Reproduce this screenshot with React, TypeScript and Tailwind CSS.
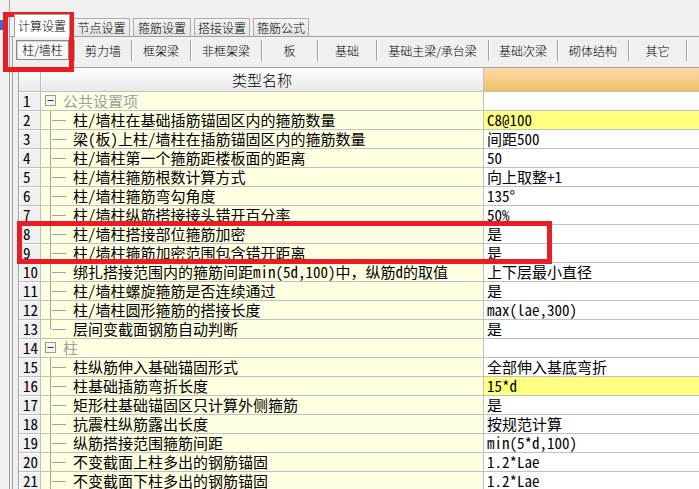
import React from "react"

type Row = {
  n: number
  text: string
  value?: string
  kind: "group" | "child" | "last"
  hl?: boolean
  clip?: boolean
}

const rows: Row[] = [
  { n: 1, text: "公共设置项", kind: "group" },
  { n: 2, text: "柱/墙柱在基础插筋锚固区内的箍筋数量", value: "C8@100", kind: "child", hl: true },
  { n: 3, text: "梁(板)上柱/墙柱在插筋锚固区内的箍筋数量", value: "间距500", kind: "child", clip: true },
  { n: 4, text: "柱/墙柱第一个箍筋距楼板面的距离", value: "50", kind: "child" },
  { n: 5, text: "柱/墙柱箍筋根数计算方式", value: "向上取整+1", kind: "child" },
  { n: 6, text: "柱/墙柱箍筋弯勾角度", value: "135°", kind: "child" },
  { n: 7, text: "柱/墙柱纵筋搭接接头错开百分率", value: "50%", kind: "child" },
  { n: 8, text: "柱/墙柱搭接部位箍筋加密", value: "是", kind: "child" },
  { n: 9, text: "柱/墙柱箍筋加密范围包含错开距离", value: "是", kind: "child" },
  { n: 10, text: "绑扎搭接范围内的箍筋间距min(5d,100)中，纵筋d的取值", value: "上下层最小直径", kind: "child" },
  { n: 11, text: "柱/墙柱螺旋箍筋是否连续通过", value: "是", kind: "child" },
  { n: 12, text: "柱/墙柱圆形箍筋的搭接长度", value: "max(lae,300)", kind: "child" },
  { n: 13, text: "层间变截面钢筋自动判断", value: "是", kind: "last" },
  { n: 14, text: "柱", kind: "group" },
  { n: 15, text: "柱纵筋伸入基础锚固形式", value: "全部伸入基底弯折", kind: "child" },
  { n: 16, text: "柱基础插筋弯折长度", value: "15*d", kind: "child", hl: true },
  { n: 17, text: "矩形柱基础锚固区只计算外侧箍筋", value: "是", kind: "child" },
  { n: 18, text: "抗震柱纵筋露出长度", value: "按规范计算", kind: "child" },
  { n: 19, text: "纵筋搭接范围箍筋间距", value: "min(5*d,100)", kind: "child" },
  { n: 20, text: "不变截面上柱多出的钢筋锚固", value: "1.2*Lae", kind: "child" },
  { n: 21, text: "不变截面下柱多出的钢筋锚固", value: "1.2*Lae", kind: "child" },
]

const topTabs = [
  { label: "节点设置", w: "w-[57px]" },
  { label: "箍筋设置", w: "w-[58px]" },
  { label: "搭接设置", w: "w-[56px]" },
  { label: "箍筋公式", w: "w-[56px]" },
]

const subTabs = [
  { label: "剪力墙", w: "w-[57px]" },
  { label: "框架梁", w: "w-[59px]" },
  { label: "非框架梁", w: "w-[71px]" },
  { label: "板", w: "w-[56px]" },
  { label: "基础", w: "w-[59px]" },
  { label: "基础主梁/承台梁", w: "w-[112px]" },
  { label: "基础次梁", w: "w-[69px]" },
  { label: "砌体结构", w: "w-[71px]" },
  { label: "其它", w: "w-[58px]" },
]

function Tree({ kind }: { kind: Row["kind"] }) {
  if (kind === "group") {
    return (
      <svg width="22" height="18" className="shrink-0">
        <rect x="4.5" y="3.5" width="10" height="10" fill="#f4f4f4" stroke="#9a9a9a" />
        <line x1="6.5" y1="8.5" x2="12.5" y2="8.5" stroke="#333" />
      </svg>
    )
  }
  return (
    <svg width="32" height="18" className="shrink-0">
      <line x1="9.5" y1="0" x2="9.5" y2={kind === "last" ? 9.5 : 18} stroke="#a0a0a0" />
      <line x1="11" y1="9.5" x2="25" y2="9.5" stroke="#a0a0a0" />
    </svg>
  )
}

export default function App() {
  return (
    <div className="relative w-[699px] h-[489px] overflow-hidden bg-[#f0f0f0] text-black font-light font-['Noto_Sans_Mono_CJK_SC','Noto_Sans_CJK_SC',sans-serif]">
      <div className="flex h-full">
        <div className="w-[9px] shrink-0 pt-[20px]">
          <div className="w-[3px] h-[10px] bg-[#2f6fd6]" />
        </div>

        <div className="flex-1 min-w-0 flex flex-col border-l border-[#a0a0a0]">
          {/* top tabs */}
          <div className="flex items-end gap-[3px] h-[37px] pl-[4px] border-b border-[#a0a0a0] text-[12px] font-['Noto_Sans_CJK_SC',sans-serif]">
            <div className="relative z-10 -mb-px w-[56px] h-[23px] bg-white border border-b-0 border-[#a0a0a0] flex items-center justify-center">
              计算设置
            </div>
            {topTabs.map((t) => (
              <div
                key={t.label}
                className={`${t.w} h-[18px] border border-b-0 border-[#acacac] bg-linear-to-b from-[#f4f4f4] to-[#e4e4e4] flex items-center justify-center leading-none`}
              >
                {t.label}
              </div>
            ))}
          </div>

          <div className="flex-1 min-h-0 ml-[2px] border-l border-[#a0a0a0] flex flex-col">
            {/* sub tabs */}
            <div className="flex h-[30px] pt-[3px] text-[12px] font-['Noto_Sans_CJK_SC',sans-serif]">
              <div className="w-[62px] h-[21px] pl-[3px] border-r border-[#a0a0a0] shadow-[1px_0_0_#ffffff]">
                <div className="w-[53px] h-[20px] border border-[#8a8a8a] bg-[#f7f7f7] shadow-[inset_1px_1px_0_#d4d4d4] flex items-center justify-center">
                  柱/墙柱
                </div>
              </div>
              {subTabs.map((s) => (
                <div
                  key={s.label}
                  className={`${s.w} h-[21px] border-r border-[#a0a0a0] shadow-[1px_0_0_#ffffff] flex items-center justify-center`}
                >
                  {s.label}
                </div>
              ))}
            </div>

            {/* grid */}
            <div className="flex-1 min-h-0 ml-[5px] border-l border-t border-[#a0a0a0] bg-white text-[15px] leading-[18px]">
              <div className="grid grid-cols-[22px_443px_1fr] h-[24px] border-b border-[#c0c0c0]">
                <div className="border-r border-[#c0c0c0] bg-linear-to-b from-white to-[#e9e9e9]" />
                <div className="border-r border-[#c0c0c0] bg-linear-to-b from-white to-[#e9e9e9] flex items-center justify-center font-['Noto_Sans_CJK_SC',sans-serif]">
                  类型名称
                </div>
                <div className="bg-linear-to-b from-[#fbdca6] to-[#f1be63]" />
              </div>

              {rows.map((r) => (
                <div key={r.n} className="grid grid-cols-[22px_443px_1fr] h-[19px] border-b border-[#c0c0c0]">
                  <div className="border-r border-[#c0c0c0] bg-[#f0f0f0] shadow-[inset_1px_1px_0_#ffffff] pl-[4px] flex items-center">
                    {r.n}
                  </div>
                  <div className={`${r.clip ? "overflow-x-clip" : ""} border-r border-[#c0c0c0] bg-[#ffffe1] flex items-center whitespace-nowrap`}>
                    <Tree kind={r.kind} />
                    <span className={r.kind === "group" ? "text-[#a0a0a0]" : ""}>{r.text}</span>
                  </div>
                  <div className={`${r.hl ? "bg-[#ffff80]" : "bg-white"} pl-[3px] flex items-center whitespace-nowrap`}>
                    {r.value}
                  </div>
                </div>
              ))}
            </div>
          </div>
        </div>
      </div>

      {/* annotation boxes */}
      <div className="absolute left-[3px] top-[12px] w-[71px] h-[60px] border-[5px] border-[#ec1c24]" />
      <div className="absolute left-[17px] top-[221px] w-[535px] h-[43px] border-[5px] border-[#ec1c24]" />
    </div>
  )
}
